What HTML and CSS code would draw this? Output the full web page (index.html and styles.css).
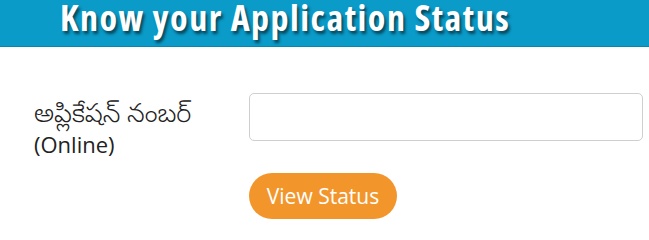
FILE: index.html
```html
<!DOCTYPE html>
<html>
<head>
<meta charset="utf-8">
<link rel="stylesheet" href="styles.css">
</head>
<body>
<header class="banner">
  <h1 class="banner-title">Know your Application Status</h1>
</header>
<main class="form">
  <div class="row">
    <label class="label" for="app"><span class="label-te">అప్లికేషన్ నంబర్</span><br>(Online)</label>
    <div class="field">
      <input id="app" class="input" type="text">
      <button class="btn" type="button">View Status</button>
    </div>
  </div>
</main>
</body>
</html>
```

FILE: styles.css
```css
* { box-sizing: border-box; }
html, body { margin: 0; padding: 0; background: #fff; }
body { width: 649px; height: 233px; overflow: hidden; }
.banner {
  display: flow-root;
  height: 47px;
  background: #0a9bc9;
  border-bottom: 1px solid #0a86ad;
  padding-left: 60px;
}
.banner-title {
  margin: 0;
  font-family: "Open Sans", sans-serif;
  font-stretch: 75%;
  font-weight: bold;
  font-size: 36px;
  line-height: 36px;
  color: #fff;
  letter-spacing: 1.5px;
  white-space: nowrap;
  text-shadow: 2px 3px 3px rgba(0,0,0,0.55);
}
.form { padding: 46px 6px 0 34px; }
.row { display: flex; }
.label {
  width: 215px;
  font-family: "Open Sans", "Noto Sans Telugu", sans-serif;
  font-size: 22px;
  line-height: 31px;
  color: #222;
  padding-top: 4px;
}
.label-te { font-size: 26px; font-weight: 300; }
.field { flex: 1; display: flex; flex-direction: column; align-items: flex-start; gap: 32px; }
.input {
  width: 394px;
  height: 48px;
  border: 1px solid #cfcfcf;
  border-radius: 5px;
  background: #fff;
}
.btn {
  width: 148px;
  height: 46px;
  border: none;
  border-radius: 23px;
  background: #f2962b;
  color: #fff;
  font-family: "Open Sans", sans-serif;
  font-size: 21px;
  padding: 0;
}
```
